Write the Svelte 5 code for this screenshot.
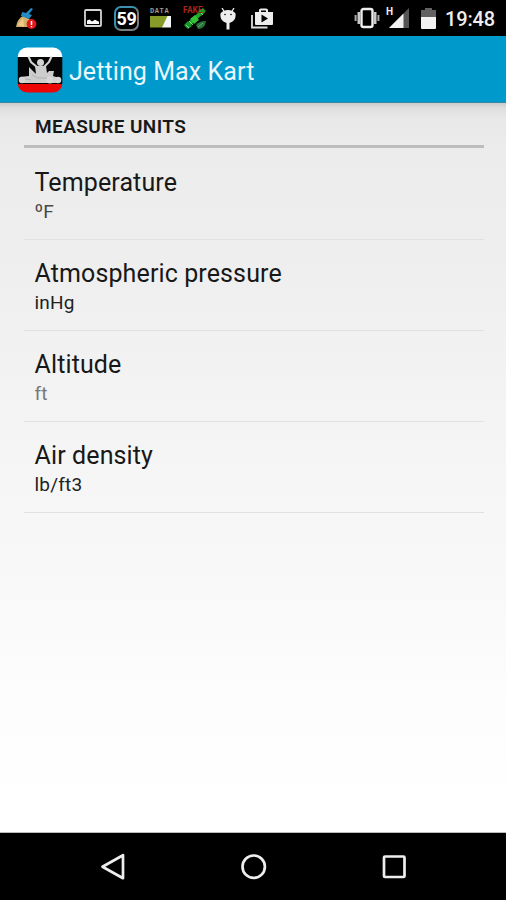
<script>
  const settings = [
    { title: 'Temperature', value: 'ºF', tone: 'mid' },
    { title: 'Atmospheric pressure', value: 'inHg', tone: 'dark' },
    { title: 'Altitude', value: 'ft', tone: 'light' },
    { title: 'Air density', value: 'lb/ft3', tone: 'dark' }
  ];
</script>

<div class="screen">
  <header class="status">
    <div class="group">
      <svg class="cleaner" width="22" height="24" viewBox="0 0 22 24">
        <path d="M1 20Q2 12 8 9l8 4 1 7z" fill="#d5b06b" />
        <path d="M3 18l5-7 1 9z" fill="#efcd88" />
        <path d="M6 9l1-4 4 1 5-5 2 1-4 5 3 1-3 4z" fill="#258bc4" />
        <circle cx="16.5" cy="17" r="4.9" fill="#e01818" />
        <path d="M16.5 14v4M16.5 19v1.2" stroke="#fff" stroke-width="1.5" />
      </svg>
      <svg class="image" width="18" height="18" viewBox="0 0 18 18">
        <rect x="1" y="1" width="16" height="16" rx="1" fill="none" stroke="#d5d5d5" stroke-width="1.8" />
        <path d="M3 15v-3.5l2.5-1 2.5 2 3-1.8 4 2V15z" fill="#fff" />
      </svg>
      <div class="counter">59</div>
      <div class="data">
        <span>DATA</span>
        <svg width="22" height="12" viewBox="0 0 22 12">
          <path d="M0 0h18.5l-6 11.5H0z" fill="#879b28" />
          <path d="M17.5 0H21v11.5h-9z" fill="#f5f5f5" />
        </svg>
      </div>
      <div class="gps">
        <span>FAKE</span>
        <svg width="24" height="24" viewBox="0 0 24 24">
          <path d="M3 20L20 4" stroke="#25a62e" stroke-width="4" />
          <path d="M1 18l4-4 4 5-4 3zM15 4l5-3 3 3-5 5z" fill="#159827" />
          <path d="M7 12l5-4 4 5-5 4z" fill="#34c338" />
          <path d="M3 18l3 3M6 14l4 4M16 4l4 4" stroke="#a2e88d" stroke-width=".8" />
          <path d="M13 18q3-4 10-4-1 8-8 8z" fill="#287438" />
          <path d="M15 20l5-4" stroke="#72a47c" />
        </svg>
      </div>
      <svg class="droid" width="16" height="22" viewBox="0 0 16 22">
        <path d="M2 0l2.5 4M14 0l-2.5 4" stroke="#eee" stroke-width="1.3" />
        <path d="M.5 5.5Q3 2 8 2t7.5 3.5q1 7.500-6 9.500v6.500h-3V15Q-.5 13 .5 5.500z" fill="#eee" />
        <circle cx="5" cy="6.500" r=".8" /><circle cx="11" cy="6.500" r=".8" />
      </svg>
      <svg class="play" width="22" height="21" viewBox="0 0 22 21">
        <path d="M1 7v12.5h15.5" fill="none" stroke="#ddd" stroke-width="1.8" />
        <path fill-rule="evenodd" d="M4 4h4V2q0-1.5 2-1.5h5q2 0 2 1.500v2h5v12q0 1-1 1H5q-1 0-1-1zM10 2.500V4h5V2.500z" fill="#ededed" />
        <path d="M10.5 6.5l6.500 4-6.500 4z" />
      </svg>
    </div>
    <div class="group right">
      <svg width="26" height="22" viewBox="0 0 26 22">
        <rect x="7.5" y="2" width="11" height="18" rx="2" fill="none" stroke="#eee" stroke-width="2.4" />
        <path d="M4.8 5v12M21.2 5v12" stroke="#c8c8c8" stroke-width="2.6" />
        <path d="M1.6 8v6M24.4 8v6" stroke="#aaa" stroke-width="2" />
      </svg>
      <div class="signal">
        <span>H</span>
        <svg width="20" height="20" viewBox="0 0 20 20">
          <path d="M0 20L20 0v20z" fill="#555" /><path d="M0 20L14.5 5.5V20z" fill="#f2f2f2" />
        </svg>
      </div>
      <svg class="battery" width="15" height="21" viewBox="0 0 15 21">
        <path d="M4 0h7v2h4v7H0V2h4z" fill="#626262" /><path d="M0 9h15v11q0 1-1 1H1q-1 0-1-1z" fill="#f3f3f3" />
      </svg>
      <time>19:48</time>
    </div>
  </header>

  <div class="appbar">
    <svg width="46" height="46" viewBox="0 0 46 46">
      <defs><clipPath id="badge"><rect x=".8" y=".5" width="44.5" height="45" rx="9" /></clipPath></defs>
      <g clip-path="url(#badge)">
        <path d="M0 0h46v10H0z" fill="#fff" />
        <path d="M0 10h46v27H0z" fill="#050505" />
        <path d="M0 37h46v9H0z" fill="#ed0505" />
        <path d="M11.5 9.500l2.500 5.500 6 5h7l5-5 2.500-5.500" fill="none" stroke="#d2d2d2" stroke-width="2.100" />
        <circle cx="23.5" cy="15.5" r="3.5" fill="#d2d2d2" />
        <path d="M18 19h11l1 7 2-2h5l-1 5 6 2 2 3-2 2H4l-2-3 1-3 9-1v-9l5 5 2 2z" fill="#cdcdcd" />
        <path d="M15 28l6 3h9M8 32l6 1" fill="none" stroke="#aaa" stroke-width=".8" />
        <circle cx="5" cy="33" r="3.2" fill="#d5d5d5" /><circle cx="33" cy="33" r="3.6" fill="#d8d8d8" />
        <circle cx="41" cy="33" r="3.3" fill="#d5d5d5" />
      </g>
    </svg>
    <h1>Jetting Max Kart</h1>
  </div>

  <main>
    <h2>MEASURE UNITS</h2>
    {#each settings as item}
      <section>
        <div class="title">{item.title}</div>
        <div class="value {item.tone}">{item.value}</div>
      </section>
    {/each}
  </main>

  <nav>
    <svg width="28" height="30" viewBox="0 0 28 30"><path d="M3.5 14.7L24 3.2v23z" /></svg>
    <svg width="28" height="30" viewBox="0 0 28 30"><circle cx="13.7" cy="14.7" r="11.2" /></svg>
    <svg width="28" height="30" viewBox="0 0 28 30"><rect x="4" y="4.5" width="20.5" height="20.5" rx="1" /></svg>
  </nav>
</div>

<style>
  :global(body) { margin: 0; }
  .screen { width: 506px; height: 900px; display: flex; flex-direction: column; font-family: Roboto, sans-serif; color: #181818; overflow: hidden; }
  .screen, .screen * { box-sizing: border-box; }
  svg { display: block; flex: none; }
  .status { height: 36px; flex: none; background: #000; display: flex; justify-content: space-between; padding: 0 11px 0 15px; color: #eee; }
  .group { display: flex; align-items: center; }
  .cleaner { margin-top: 1px; }
  .image { margin-left: 47px; }
  .counter { width: 25px; height: 25px; margin-left: 12px; border: 2px solid #777f83; border-top-color: #3a92b0; border-left-color: #3a92b0; border-radius: 7px; color: #fff; font: 700 18px/21px Roboto, sans-serif; letter-spacing: -.4px; display: flex; justify-content: center; }
  .data { width: 22px; margin-left: 11px; height: 20px; display: flex; flex-direction: column; justify-content: space-between; margin-top: -1px; }
  .data span { font: 700 7px/7px "Liberation Mono", monospace; letter-spacing: .6px; color: #999; }
  .gps { position: relative; margin-left: 11px; }
  .gps span { position: absolute; left: 0; top: 1px; font: 700 8.5px/9px Roboto, sans-serif; color: #a62518; }
  .gps svg { margin-top: 2px; }
  .droid { margin-left: 13px; margin-top: 1px; }
  .play { margin-left: 15px; margin-top: 1px; }
  .signal { position: relative; margin-left: 9px; }
  .signal span { position: absolute; left: -3px; top: -1px; font: 700 10px/10px Roboto, sans-serif; }
  .battery { margin-left: 12px; }
  time { margin-left: 9px; font-size: 20px; font-weight: 500; line-height: 36px; padding-top: 2px; letter-spacing: -.15px; }
  .appbar { height: 67px; flex: none; background: #0099cc; border-bottom: 1px solid #3787a6; display: flex; align-items: center; padding: 2px 0 0 17px; }
  h1 { margin: 3px 0 0 6px; font-weight: 400; font-size: 25px; line-height: 32px; color: #e9f7fc; letter-spacing: .08px; }
  main { flex: 1; padding: 0 22px 0 24px; background: linear-gradient(#cbcbcb, #dedede 5px, #e8e8e8 15px, rgba(232,232,232,0) 45px), linear-gradient(#ebebeb, #eee 20%, #f5f5f5 48%, #f9f9f9 68%, #fdfdfd 82%, #fff 100%); border-bottom: 1px solid #bbb; }
  h2 { height: 45px; margin: 0; padding: 11px 11px 0; border-bottom: 3px solid #bdbdbd; font-size: 19px; line-height: 25px; font-weight: 600; letter-spacing: .42px; white-space: nowrap; }
  section { height: 91px; padding: 18px 11px 0; background: linear-gradient(#e1e1e1, #e1e1e1) 0 100% / 100% 1px no-repeat; }
  section:first-of-type { height: 92px; padding-top: 19px; }
  .title { font-size: 25px; line-height: 32px; letter-spacing: .12px; margin-left: -.5px; }
  .value { font-size: 19px; line-height: 26px; margin: 0 0 0 -.5px; letter-spacing: .2px; }
  .mid { color: #484848; }
  .light { color: #777; }
  .dark { color: #222; }
  nav { height: 67px; flex: none; background: #000; display: flex; justify-content: space-between; align-items: center; padding: 0 98px 0 99px; }
  nav path, nav circle, nav rect { fill: none; stroke: #eee; stroke-width: 2.7; stroke-linejoin: round; }
</style>
